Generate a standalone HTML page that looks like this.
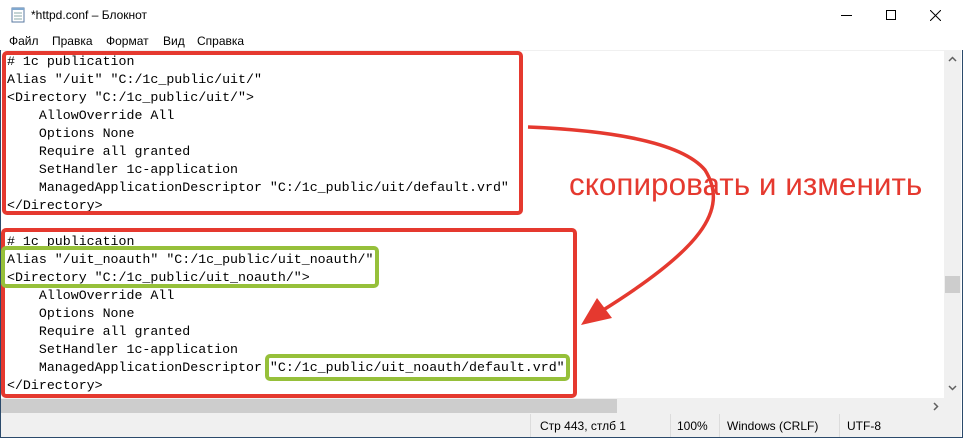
<!DOCTYPE html>
<html><head><meta charset="utf-8"><style>
*{margin:0;padding:0;box-sizing:border-box}
body{width:963px;height:438px;overflow:hidden;background:#fff;font-family:"Liberation Sans",sans-serif;position:relative}
.win{position:absolute;left:0;top:0;width:963px;height:438px;border:1px solid #2b4a6b}
.title{position:absolute;left:0;top:0;width:963px;height:31px;background:#fff}
.title span{position:absolute;left:31px;top:8px;font-size:12px;color:#000}
.menu{position:absolute;left:0;top:31px;width:963px;height:19px;background:#fff;font-size:12px}
.menu span{position:absolute;top:3px}
.edit{position:absolute;left:1px;top:50px;width:943px;height:348px;background:#fff;border-top:1px solid #f0f0f0}
pre{position:absolute;left:6px;top:2px;font-family:"Liberation Mono",monospace;font-size:12.5px;line-height:18px;color:#000;transform:scaleX(1.062);transform-origin:0 0}
.vs{position:absolute;left:944px;top:50px;width:17px;height:348px;background:#f0f0f0}
.hs{position:absolute;left:1px;top:398px;width:960px;height:16px;background:#f0f0f0}
.status{position:absolute;left:1px;top:414px;width:960px;height:23px;background:#f0f0f0;font-size:12px;color:#000}
.status span{position:absolute;top:5px}
.sep{position:absolute;top:0;width:1px;height:23px;background:#dcdcdc}
.box{position:absolute;border-radius:5px}
</style></head><body>
<div class="win"></div>
<div class="title">
<svg style="position:absolute;left:10px;top:7px" width="16" height="16"><rect x="2" y="1" width="12" height="14" fill="#fff" stroke="#5a7aa0"/><path d="M4 6h8M4 9h8M4 12h8" stroke="#8aa" /><rect x="2" y="1" width="12" height="2" fill="#7fa8d0"/></svg>
<span>*httpd.conf – Блокнот</span>
<div style="position:absolute;left:841px;top:15px;width:11px;height:1px;background:#000"></div>
<div style="position:absolute;left:886px;top:10px;width:10px;height:10px;border:1px solid #000"></div>
<svg style="position:absolute;left:930px;top:10px" width="11" height="11"><path d="M0 0L11 11M11 0L0 11" stroke="#000" stroke-width="1"/></svg>
</div>
<div class="menu"><span style="left:9px">Файл</span><span style="left:52px">Правка</span><span style="left:106px">Формат</span><span style="left:163px">Вид</span><span style="left:197px">Справка</span></div>
<div class="edit"><pre># 1c publication
Alias "/uit" "C:/1c_public/uit/"
&lt;Directory "C:/1c_public/uit/"&gt;
    AllowOverride All
    Options None
    Require all granted
    SetHandler 1c-application
    ManagedApplicationDescriptor "C:/1c_public/uit/default.vrd"
&lt;/Directory&gt;

# 1c publication
Alias "/uit_noauth" "C:/1c_public/uit_noauth/"
&lt;Directory "C:/1c_public/uit_noauth/"&gt;
    AllowOverride All
    Options None
    Require all granted
    SetHandler 1c-application
    ManagedApplicationDescriptor "C:/1c_public/uit_noauth/default.vrd"
&lt;/Directory&gt;</pre></div>
<div class="vs"><svg style="position:absolute;left:4px;top:6px" width="9" height="6"><path d="M1 5L4.5 1.5L8 5" stroke="#606060" stroke-width="1.5" fill="none"/></svg>
<div style="position:absolute;left:1px;top:226px;width:15px;height:17px;background:#cdcdcd"></div>
<svg style="position:absolute;left:4px;top:335px" width="9" height="6"><path d="M1 1L4.5 4.5L8 1" stroke="#606060" stroke-width="1.5" fill="none"/></svg></div>
<div class="hs"><div style="position:absolute;left:0;top:1px;width:616px;height:14px;background:#cdcdcd"></div>
<svg style="position:absolute;left:932px;top:4px" width="6" height="9"><path d="M1 1L4.5 4.5L1 8" stroke="#606060" stroke-width="1.5" fill="none"/></svg></div>
<div class="status">
<div class="sep" style="left:529px"></div><span style="left:539px">Стр 443, стлб 1</span>
<div class="sep" style="left:669px"></div><span style="left:676px">100%</span>
<div class="sep" style="left:718px"></div><span style="left:726px">Windows (CRLF)</span>
<div class="sep" style="left:838px"></div><span style="left:846px">UTF-8</span>
</div>
<div class="box" style="left:2px;top:51px;width:521px;height:164px;border:4px solid #e5392f"></div>
<div class="box" style="left:1px;top:228px;width:576px;height:170px;border:4px solid #e5392f"></div>
<div class="box" style="left:1px;top:246px;width:378px;height:42px;border:4px solid #96c03a"></div>
<div class="box" style="left:265px;top:354px;width:305px;height:27px;border:4px solid #96c03a"></div>
<svg style="position:absolute;left:0;top:0" width="963" height="438">
<path d="M528 127C600 130 680 140 705 170C730 210 700 250 600 312" stroke="#e5392f" stroke-width="3.5" fill="none"/>
<path d="M581 325L597 298L612 318Z" fill="#e5392f"/>
</svg>
<div style="position:absolute;left:569px;top:166px;font-size:31.5px;color:#e5392f;white-space:nowrap">скопировать и изменить</div>
</body></html>
